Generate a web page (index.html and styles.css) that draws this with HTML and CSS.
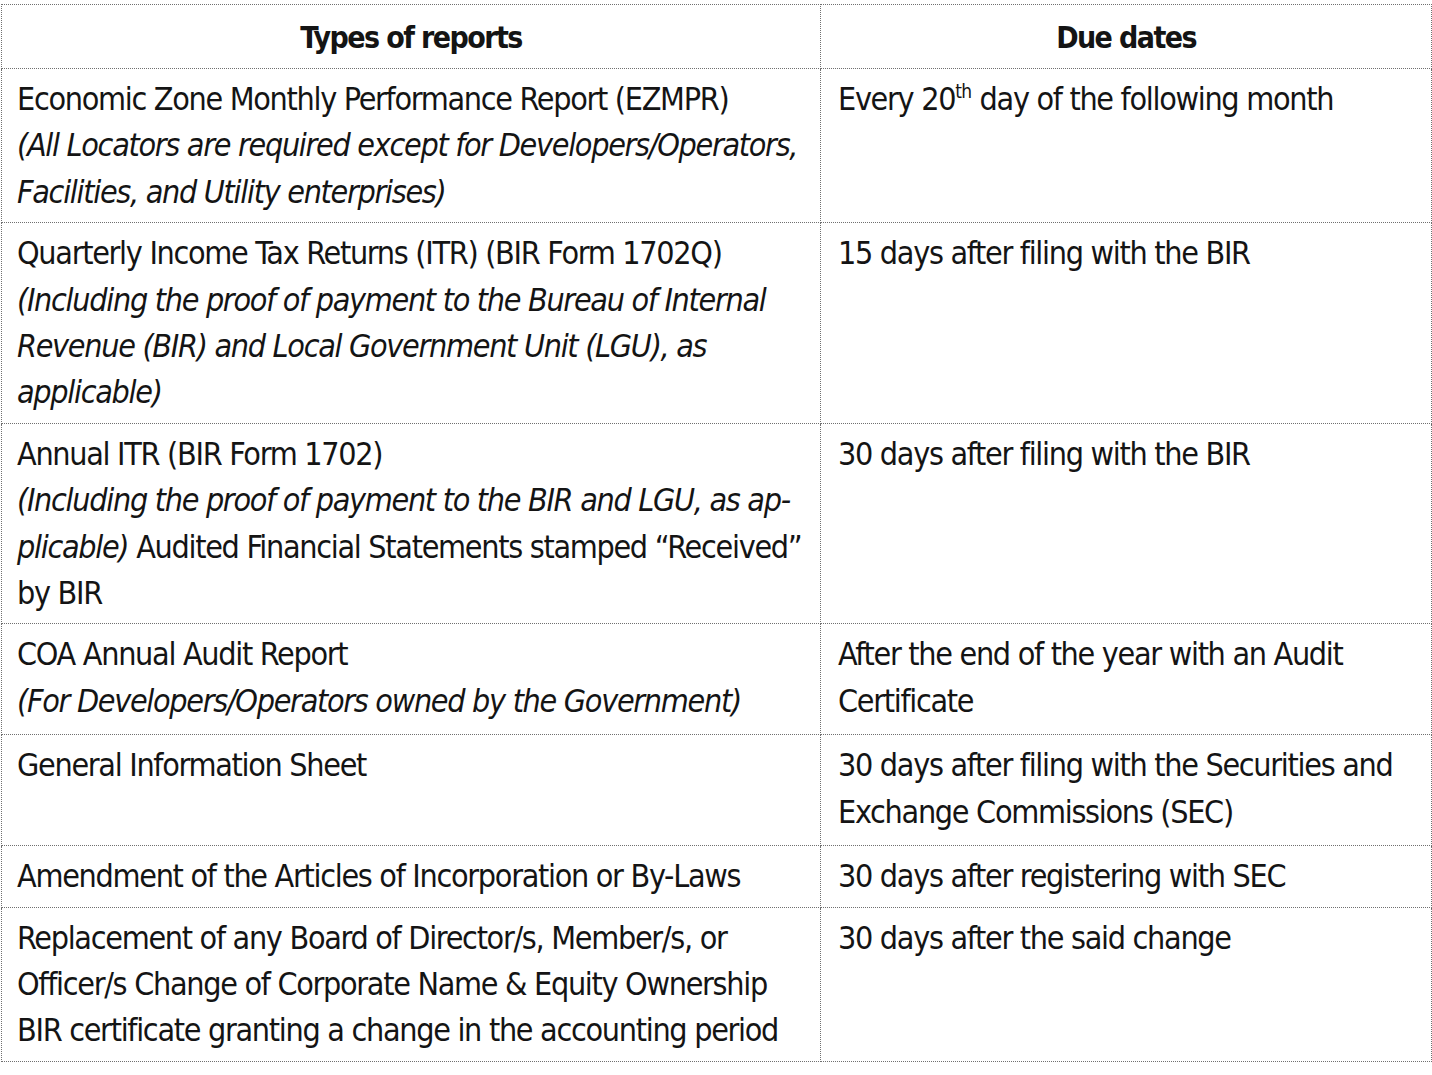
FILE: index.html
```html
<!DOCTYPE html>
<html lang="en">
<head>
<meta charset="utf-8">
<title>Reports and due dates</title>
<link rel="stylesheet" href="styles.css">
</head>
<body>
<table class="reports">
  <colgroup>
    <col class="col-type">
    <col class="col-due">
  </colgroup>
  <thead>
    <tr>
      <th>Types of reports</th>
      <th>Due dates</th>
    </tr>
  </thead>
  <tbody>
    <tr>
      <td>Economic Zone Monthly Performance Report (EZMPR)<br><em>(All Locators are required except for Developers/Operators,<br>Facilities, and Utility enterprises)</em></td>
      <td>Every 20<sup>th</sup> day of the following month</td>
    </tr>
    <tr>
      <td>Quarterly Income Tax Returns (ITR) (BIR Form 1702Q)<br><em>(Including the proof of payment to the Bureau of Internal<br>Revenue (BIR) and Local Government Unit (LGU), as<br>applicable)</em></td>
      <td>15 days after filing with the BIR</td>
    </tr>
    <tr>
      <td>Annual ITR (BIR Form 1702)<br><em>(Including the proof of payment to the BIR and LGU, as ap-<br>plicable)</em> Audited Financial Statements stamped “Received”<br>by BIR</td>
      <td>30 days after filing with the BIR</td>
    </tr>
    <tr class="roomy">
      <td>COA Annual Audit Report<br><em>(For Developers/Operators owned by the Government)</em></td>
      <td>After the end of the year with an Audit<br>Certificate</td>
    </tr>
    <tr class="roomy">
      <td>General Information Sheet</td>
      <td>30 days after filing with the Securities and<br>Exchange Commissions (SEC)</td>
    </tr>
    <tr>
      <td>Amendment of the Articles of Incorporation or By-Laws</td>
      <td>30 days after registering with SEC</td>
    </tr>
    <tr>
      <td>Replacement of any Board of Director/s, Member/s, or<br>Officer/s Change of Corporate Name &amp; Equity Ownership<br>BIR certificate granting a change in the accounting period</td>
      <td>30 days after the said change</td>
    </tr>
  </tbody>
</table>
</body>
</html>
```

FILE: styles.css
```css
html, body {
  margin: 0;
  padding: 0;
  background: #ffffff;
}

body {
  font-family: "DejaVu Sans", sans-serif;
  font-stretch: condensed;
  color: #141414;
}

.reports {
  margin: 4px 0 0 1px;
  width: 1430px;
  border-collapse: collapse;
  table-layout: fixed;
  font-size: 32px;
  line-height: 46.4px;
  letter-spacing: -1.3px;
}

.col-type {
  width: 819px;
}

.col-due {
  width: 611px;
}

.reports th,
.reports td {
  border: 1px dotted #707070;
  vertical-align: top;
  text-align: left;
  white-space: nowrap;
}

.reports th {
  font-size: 30px;
  font-weight: bold;
  letter-spacing: -1.6px;
  text-align: center;
  line-height: 46px;
  padding: 10px 16px 7px;
}

.reports td {
  padding: 7px 16px 7px 17px;
}

.reports td:first-child {
  padding-left: 15px;
}

.reports .roomy td {
  padding-bottom: 10px;
}

.reports em {
  font-style: italic;
}

.reports sup {
  font-size: 19px;
  line-height: 0;
  letter-spacing: -0.5px;
  vertical-align: 12px;
}
```
